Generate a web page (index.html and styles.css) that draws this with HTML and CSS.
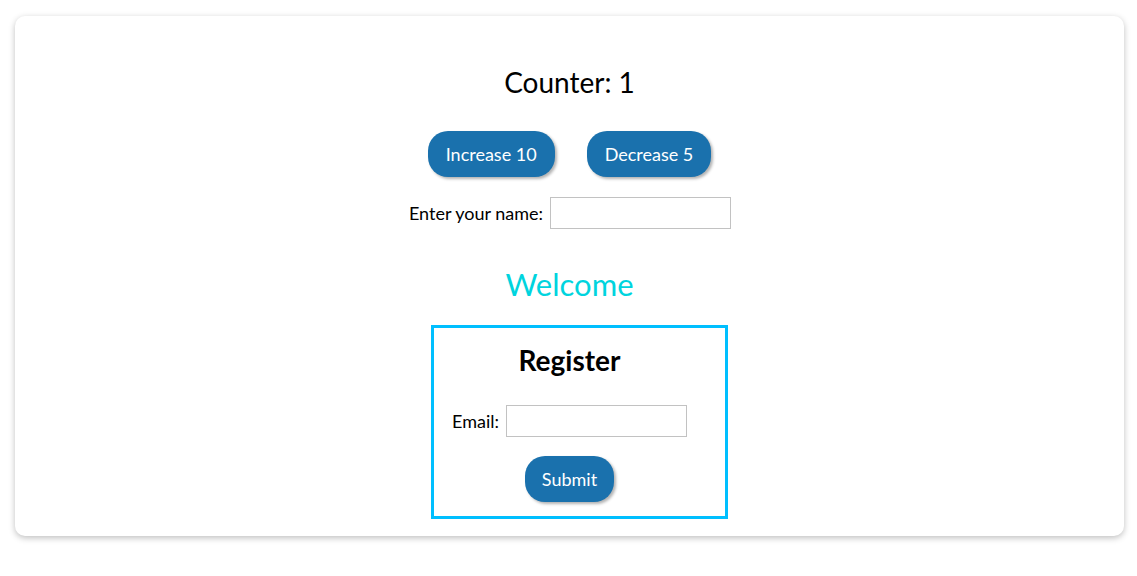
FILE: index.html
```html
<!DOCTYPE html>
<html>
<head>
<meta charset="utf-8">
<link rel="stylesheet" href="styles.css">
</head>
<body>
<div class="card">
  <h2 class="counter">Counter: 1</h2>
  <div class="buttons">
    <button class="btn">Increase 10</button>
    <button class="btn">Decrease 5</button>
  </div>
  <div class="name-row">
    <label class="label">Enter your name:</label>
    <input class="field" type="text">
  </div>
  <h2 class="welcome">Welcome</h2>
  <div class="register">
    <h3 class="reg-title">Register</h3>
    <div class="email-row">
      <label class="label">Email:</label>
      <input class="field" type="text">
    </div>
    <button class="btn btn-submit">Submit</button>
  </div>
</div>
</body>
</html>
```
FILE: styles.css
```css
html, body { margin: 0; padding: 0; background: #fff; }
body {
  padding: 16px 13px 40px 15px;
  font-family: "Lato", "Liberation Sans", sans-serif;
  color: #000;
}
.card {
  background: #fff;
  border-radius: 10px;
  box-shadow: 0 2px 6px rgba(0,0,0,0.25);
  display: flex;
  flex-direction: column;
  align-items: center;
  padding: 49px 0 18px;
  height: 453px;
}
.counter {
  margin: 0;
  font-size: 28px;
  line-height: 34px;
  font-weight: 400;
}
.buttons {
  display: flex;
  gap: 32px;
  margin-top: 32px;
}
.btn {
  font-family: inherit;
  font-size: 18px;
  color: #fff;
  background: #1a71ad;
  border: none;
  border-radius: 20px;
  height: 46px;
  padding: 0 18px;
  box-shadow: 2px 2px 3px rgba(0,0,0,0.3);
}
.name-row, .email-row {
  display: flex;
  align-items: center;
  gap: 7px;
}
.name-row { margin-top: 20px; margin-left: 1px; }
.label { font-size: 18px; }
.field {
  width: 181px;
  height: 32px;
  box-sizing: border-box;
  border: 1px solid #c2c2c2;
  margin: 0;
  padding: 0 4px;
}
.welcome {
  margin: 37px 0 0;
  font-size: 31px;
  line-height: 36px;
  font-weight: 400;
  color: #00d4de;
}
.register {
  margin: 23px 0 0 20px;
  width: 297px;
  box-sizing: border-box;
  border: 3px solid #00bfff;
  display: flex;
  flex-direction: column;
  align-items: center;
  padding: 15px 20px 14px 0;
}
.reg-title {
  margin: 0;
  font-size: 28px;
  line-height: 34px;
  font-weight: 700;
}
.email-row { margin-top: 28px; }
.btn-submit { margin-top: 19px; padding: 0 17px; }
```
